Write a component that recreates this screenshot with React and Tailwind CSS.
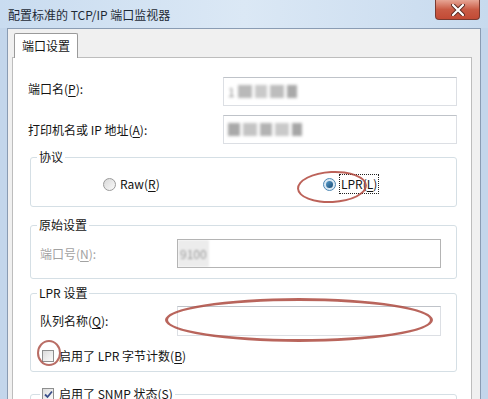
import React from 'react';

function TextBox({ w, h, disabled, children }) {
  return (
    <div
      className={
        'flex items-center overflow-hidden bg-white border ' +
        (disabled ? 'border-[#b4b4b4]' : 'border-[#dcdfe4] border-t-[#bfc3c9]')
      }
      style={{ width: w, height: h }}
    >
      {children}
    </div>
  );
}

function Blurred() {
  return (
    <div className="ml-[4px] flex items-center gap-[3px] blur-[1.5px]">
      <span className="text-[#8a8a8a]">1</span>
      <div className="h-[13px] w-[14px] bg-[#b9b9b9]" />
      <div className="h-[13px] w-[12px] bg-[#c9c9c9]" />
      <div className="h-[13px] w-[14px] bg-[#bdbdbd]" />
      <div className="h-[13px] w-[10px] bg-[#a9a9a9]" />
    </div>
  );
}

function Checkbox({ checked }) {
  return (
    <div className="flex h-[12px] w-[12px] items-center justify-center border border-[#8e8f8f] bg-gradient-to-br from-[#dcdcdc] to-[#fbfbfb]">
      {checked && (
        <svg width="9" height="9" viewBox="0 0 9 9">
          <path d="M1 4.5 L3.5 7 L8 1.5" fill="none" stroke="#3b4f8a" strokeWidth="1.8" />
        </svg>
      )}
    </div>
  );
}

export default function App() {
  return (
    <div className="relative h-[399px] w-[488px] overflow-hidden bg-[#c3d6eb] text-[12px] leading-[16px] text-[#141414] [font-family:'Noto_Sans_CJK_SC',sans-serif]">
      {/* title bar */}
      <div className="flex h-[28px] items-start bg-gradient-to-r from-[#c9dcf0] via-[#dbe8f5] to-[#c7daee]">
        <div className="pl-[8px] pt-[7px] text-[#1e2a36]">配置标准的 TCP/IP 端口监视器</div>
        <div className="ml-auto mr-[8px] flex h-[20px] w-[45px] items-center justify-center rounded-b-[4px] border border-t-0 border-[#7a3a30] bg-gradient-to-b from-[#e6a595] via-[#c95b45] to-[#c24a35]">
          <svg width="14" height="12" viewBox="0 0 14 12">
            <path d="M2 1 L12 11 M12 1 L2 11" stroke="#5a2a22" strokeWidth="4" strokeLinecap="round" />
            <path d="M2 1 L12 11 M12 1 L2 11" stroke="#ffffff" strokeWidth="2.2" strokeLinecap="round" />
          </svg>
        </div>
      </div>

      {/* dialog body */}
      <div className="ml-[7px] mr-[7px] h-full border-l border-r border-t border-[#8a9cb3] bg-[#f0f0f0] pl-[4px] pr-[8px] pt-[4px]">
        <div className="relative z-10 -mb-px ml-[2px] flex h-[25px] w-[64px] items-center justify-center rounded-t-[2px] border border-b-0 border-[#9a9a9a] bg-white">
          端口设置
        </div>
        <div className="h-[400px] border border-[#bdbdbd] bg-white pt-[19px]">
          {/* port name */}
          <div className="ml-[15px] flex items-center">
            <div className="mb-[6px] w-[195px]">
              端口名(<u className="underline-offset-2">P</u>):
            </div>
            <TextBox w={234} h={29}>
              <Blurred />
            </TextBox>
          </div>
          <div className="ml-[15px] mt-[9px] flex items-center">
            <div className="w-[195px]">
              打印机名或 IP 地址(<u className="underline-offset-2">A</u>):
            </div>
            <TextBox w={234} h={29}>
              <div className="ml-[4px] flex items-center gap-[3px] blur-[1.5px]">
                <div className="h-[13px] w-[12px] bg-[#a9a9a9]" />
                <div className="h-[13px] w-[14px] bg-[#c4c4c4]" />
                <div className="h-[13px] w-[12px] bg-[#b3b3b3]" />
                <div className="h-[13px] w-[14px] bg-[#c9c9c9]" />
                <div className="h-[13px] w-[10px] bg-[#a6a6a6]" />
              </div>
            </TextBox>
          </div>

          {/* protocol */}
          <fieldset className="ml-[17px] mt-[5px] w-[427px] rounded-[3px] border border-[#d5dfe5] pb-[12px] pt-[9px]">
            <legend className="ml-[6px] px-[2px]">协议</legend>
            <div className="flex h-[20px] items-center">
              <div className="ml-[72px] flex w-[220px] items-center gap-[4px]">
                <div className="h-[13px] w-[13px] rounded-full border border-[#9a9a9a] bg-gradient-to-br from-[#d8d8d8] to-[#fafafa]" />
                <span>
                  Raw(<u className="underline-offset-2">R</u>)
                </span>
              </div>
              <div className="flex items-center gap-[3px]">
                <div className="flex h-[13px] w-[13px] items-center justify-center rounded-full border border-[#4f89b5] bg-[#dbe9f4]">
                  <div className="h-[7px] w-[7px] rounded-full bg-gradient-to-br from-[#5aa0cf] to-[#174a73]" />
                </div>
                <span className="border border-dotted border-[#222] px-px py-px">
                  LPR(<u className="underline-offset-2">L</u>)
                </span>
              </div>
            </div>
          </fieldset>

          {/* raw settings */}
          <fieldset className="ml-[17px] mt-[10px] w-[427px] rounded-[3px] border border-[#d5dfe5] pb-[10px] pt-[6px]">
            <legend className="ml-[6px] px-[2px]">原始设置</legend>
            <div className="flex items-center">
              <div className="ml-[9px] w-[137px] text-[#a2a2a2]">
                端口号(<u className="underline-offset-2">N</u>):
              </div>
              <TextBox w={264} h={29} disabled>
                <div className="flex h-full items-center bg-[#ececec] px-[2px] text-[#9a9a9a] blur-[1px]">9100</div>
              </TextBox>
            </div>
          </fieldset>

          {/* LPR settings */}
          <fieldset className="ml-[17px] mt-[6px] w-[427px] rounded-[3px] border border-[#d5dfe5] pb-[7px] pt-[5px]">
            <legend className="ml-[6px] px-[2px]">LPR 设置</legend>
            <div className="flex items-center">
              <div className="ml-[9px] w-[137px]">
                队列名称(<u className="underline-offset-2">Q</u>):
              </div>
              <TextBox w={264} h={30} />
            </div>
            <div className="ml-[11px] mt-[12px] flex h-[16px] items-center gap-[5px]">
              <Checkbox />
              <span>
                启用了 LPR 字节计数(<u className="underline-offset-2">B</u>)
              </span>
            </div>
          </fieldset>

          {/* SNMP */}
          <fieldset className="ml-[17px] mt-[14px] h-[60px] w-[427px] rounded-[3px] border border-[#d5dfe5]">
            <legend className="ml-[9px] px-[2px]">
              <div className="flex items-center gap-[5px]">
                <Checkbox checked />
                <span>
                  启用了 SNMP 状态(<u className="underline-offset-2">S</u>)
                </span>
              </div>
            </legend>
          </fieldset>
        </div>
      </div>

      {/* red annotation marks */}
      <div className="absolute left-[297px] top-[171px] h-[32px] w-[70px] rounded-[50%] border-2 border-[#b0463c]/85 -rotate-3" />
      <div className="absolute left-[165px] top-[298px] h-[44px] w-[268px] rounded-[50%] border-[3px] border-[#ad4a3f]/85" />
      <div className="absolute left-[37px] top-[340px] h-[26px] w-[24px] rounded-[50%] border-2 border-[#a8483e]/80" />
    </div>
  );
}
